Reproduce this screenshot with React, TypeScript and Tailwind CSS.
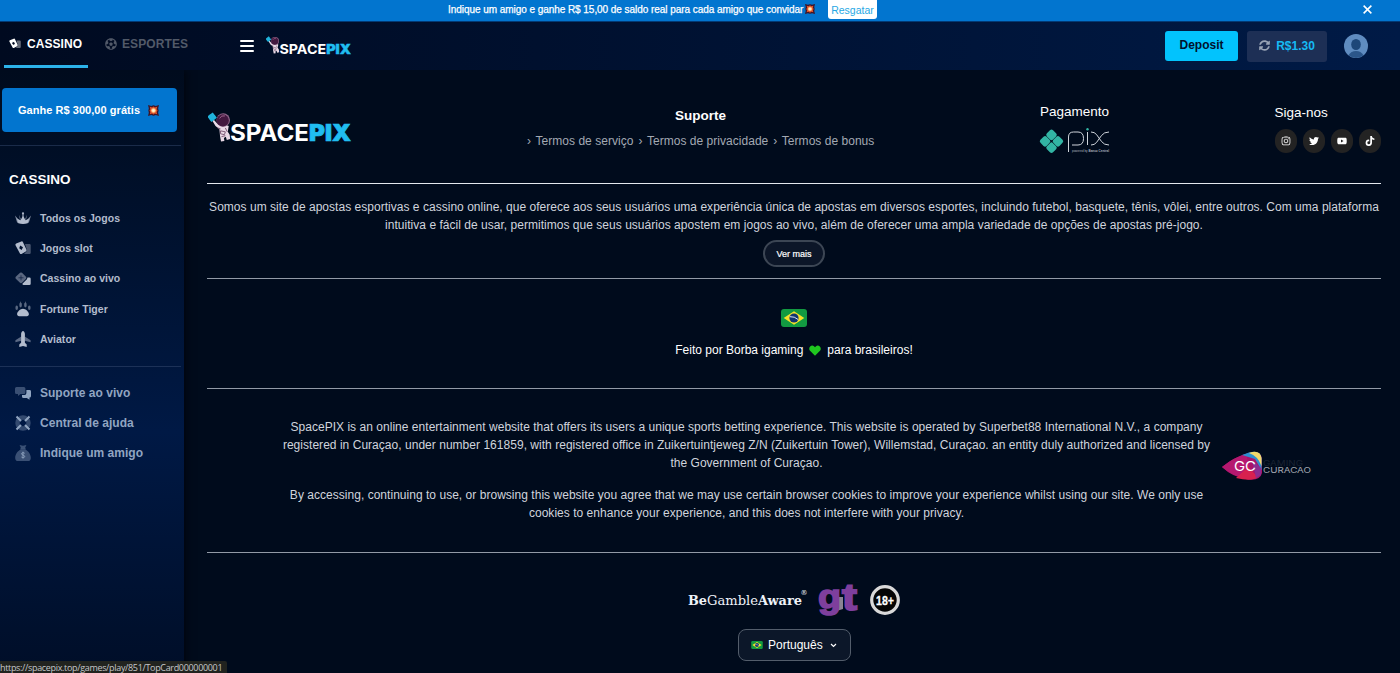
import type { ReactNode } from 'react';
import { FaFutbol, FaInstagram, FaSyncAlt, FaTiktok, FaTwitter, FaYoutube } from 'react-icons/fa';

function Boom({ className }: { className: string }) {
  return (
    <svg viewBox="0 0 12 12" className={className}>
      <path d="M0 0l3.500 1L6 .4 8.500 1 12 0l-.9 3.500L11.600 6l-.5 2.500L12 12l-3.500-1-2.500.6L3.500 11 0 12l.9-3.500L.4 6l.5-2.500z" fill="#3d1427" />
      <path d="M2 2l2.500.6L6 1.600l1.500 1L10 2l-.6 2.500 1 1.500-1 1.500L10 10l-2.500-.6-1.500 1-1.500-1L2 10l.6-2.500-1-1.500 1-1.500z" fill="#e2562d" />
      <circle cx="6" cy="6" r="2.500" fill="#ffd08a" />
      <circle cx="6" cy="6" r="1.300" fill="#fff3d6" />
    </svg>
  );
}

function CardsIcon({ className }: { className: string }) {
  return (
    <svg viewBox="0 0 16 14" className={className} fill="currentColor">
      <path d="M10 3h4.500A1.200 1.200 0 0 1 15.700 4.200v7.600A1.200 1.200 0 0 1 14.500 13H9l3.200-3.500z" opacity=".4" />
      <path fillRule="evenodd" d="M1.200 2.600L6.300.5a1.300 1.300 0 0 1 1.700.7l3.500 7.600a1.300 1.300 0 0 1-.7 1.700L6.500 12.900a1.300 1.300 0 0 1-1.700-.7L.5 4.300a1.300 1.300 0 0 1 .7-1.700zM5.200 4.600L4.200 7.300 6.600 8.900 8 6.200z" />
    </svg>
  );
}

function CrownIcon() {
  return (
    <svg viewBox="0 0 16 14" className="h-[14px] w-4" fill="currentColor">
      <path d="M2 7.500l3.500 1.700L7 6.500 8 5l1 1.500 1.500 2.700L14 7.500l-1.300 4.700Q8 13.800 3.300 12.200z" />
      <path d="M0 4.500l3 3.500.8 3.500-1.600.3zM16 4.500l-3 3.500-.8 3.500 1.600.3zM4 3.800l1.600 3.700-.4 2zM12 3.800l-1.600 3.700.4 2zM7.300 3h1.400v4H7.300z" opacity=".75" />
      <circle cx="8" cy="2.300" r="1.100" />
    </svg>
  );
}

function DiceIcon() {
  return (
    <svg viewBox="0 0 16 14" className="h-[14px] w-4" fill="currentColor">
      <path d="M5 .8q1-.8 2 0l4 4q.8 1 0 2l-4 4q-1 .8-2 0l-4.200-4q-.8-1 0-2z" opacity=".5" />
      <path d="M6 3.300v5M3.500 5.800h5" stroke="#001238" strokeWidth=".6" />
      <path d="M12.500 5.500h1.900a1.300 1.300 0 0 1 1.300 1.300v4.900a1.300 1.300 0 0 1-1.300 1.300H8.700a1.300 1.300 0 0 1-1.300-1.300l4.500-4.500z" />
    </svg>
  );
}

function PawIcon() {
  return (
    <svg viewBox="0 0 16 16" className="size-4" fill="currentColor">
      <path d="M8 7.700c2.600 0 5.900 3 5.900 5.400 0 1.500-.8 2.100-2 2.100H4.100c-1.200 0-2-.6-2-2.100 0-2.400 3.300-5.400 5.900-5.400z" />
      <g opacity=".5">
        <ellipse cx="5.600" cy="4" rx="1.300" ry="2.400" />
        <ellipse cx="10.400" cy="4" rx="1.300" ry="2.400" />
        <ellipse cx="1.700" cy="6.800" rx="1.300" ry="2.200" />
        <ellipse cx="14.300" cy="6.800" rx="1.300" ry="2.200" />
        <path d="M5 2.500L5.400 0l.8 2.500zM9.800 2.500l.8-2.500.4 2.500z" />
      </g>
    </svg>
  );
}

function PlaneIcon() {
  return (
    <svg viewBox="0 0 16 16" className="size-4" fill="currentColor">
      <path d="M6.300 5.500L.4 9.300v1.900l5.900-1.500zM9.700 5.500l5.900 3.800v1.900L9.700 9.700z" opacity=".5" />
      <path d="M8 0c.9 0 1.900 1.500 1.900 3v8.800l1.800 1.800V16L8 15l-3.700 1v-2.400l1.800-1.800V3C6.100 1.500 7.100 0 8 0z" />
    </svg>
  );
}

function ChatIcon() {
  return (
    <svg viewBox="0 0 16 14" className="h-[14px] w-4" fill="currentColor">
      <path d="M1.500 1h7.400a1.500 1.500 0 0 1 1.500 1.500v4A1.500 1.500 0 0 1 8.900 8H5.500L3 10V8H1.500A1.500 1.500 0 0 1 0 6.500v-4A1.500 1.500 0 0 1 1.500 1z" opacity=".4" />
      <path d="M11.400 4h3A1.500 1.500 0 0 1 16 5.500v4.500a1.500 1.500 0 0 1-1.500 1.500H14.500v2.200L11.800 12H8.500A1.500 1.500 0 0 1 7 10.500V9h2.500a1.900 1.900 0 0 0 1.900-1.900z" />
    </svg>
  );
}

function HelpIcon() {
  return (
    <svg viewBox="0 0 16 16" className="size-4">
      <circle cx="8" cy="8" r="5.500" fill="none" stroke="currentColor" strokeWidth="4.400" opacity=".35" />
      <path d="M1.500 1.500L6 6M14.500 1.500L10 6M1.500 14.500L6 10M14.500 14.500L10 10" stroke="currentColor" strokeWidth="2" />
    </svg>
  );
}

function MoneyBagIcon() {
  return (
    <svg viewBox="0 0 16 16" className="size-4">
      <path d="M4.600 0l3.400.8 3.400-.8-1.300 3H5.900z" fill="currentColor" opacity=".4" />
      <path d="M5.400 4.600h5.200c2.500 1.700 5.200 4.500 5.200 8.300 0 2-1 3.100-2.800 3.100H3c-1.800 0-2.800-1.100-2.800-3.100 0-3.800 2.700-6.600 5.200-8.300z" fill="currentColor" opacity=".4" />
      <path d="M5.500 3.800h5" stroke="currentColor" opacity=".6" />
      <path d="M9.700 8.300C9 7.400 6.500 7.500 6.500 8.900s3.200 1 3.200 2.500-2.500 1.600-3.300.6M8 6.700v6.800" fill="none" stroke="currentColor" strokeWidth=".9" />
    </svg>
  );
}

function Astronaut({ className }: { className: string }) {
  return (
    <svg viewBox="0 0 28 30" className={className}>
      <path d="M4.500 8.500l1.500-1 4.500 5 6-.5 5 2-1 6 2 3 .5 4.500-3.500 1-1-3.500-2 1.500.5 3-3.500.5-1-5.500-.7-7.500-4-3z" fill="#e9d9e6" />
      <path d="M10 16l3 1M13 19l5 1-1 3-4-1zM14 25l4-1M18 16l2 4" stroke="#7d5876" fill="none" />
      <circle cx="15.800" cy="7.800" r="7" fill="#8e6488" />
      <circle cx="15.300" cy="8.200" r="6.300" fill="#43183f" />
      <path d="M12 6q2-3.500 5.500-2.500" stroke="#a0688f" fill="none" />
      <g fill="#20b3dc" transform="rotate(8 4 5)">
        <path d="M4.200-.2l2.600 2.500-2.600 2.500-2.600-2.500zM4.200 4.800l2.600 2.500-2.600 2.500-2.600-2.500zM1.700 2.200l2.600 2.600-2.600 2.500L-.9 4.800zM6.700 2.200l2.500 2.600-2.500 2.500-2.600-2.500z" />
      </g>
    </svg>
  );
}

function Wordmark({ className }: { className: string }) {
  return (
    <svg viewBox="0 0 122 22" className={`overflow-visible ${className}`} fontFamily="Inter, sans-serif" fontSize="22.500">
      <text x="0" y="18" textLength="79" lengthAdjust="spacingAndGlyphs" fontWeight="700" fill="#fff">SPACE</text>
      <text x="79" y="18" textLength="42" lengthAdjust="spacingAndGlyphs" fontWeight="900" fill="#20bdf0" stroke="#20bdf0" strokeWidth=".7">PIX</text>
    </svg>
  );
}

function Brazil({ className }: { className: string }) {
  return (
    <svg viewBox="0 0 26 18" className={className}>
      <rect width="26" height="18" rx="3" fill="#129a41" />
      <path d="M13 2.200L23.300 9 13 15.800 2.700 9z" fill="#f7e12a" />
      <circle cx="13" cy="9" r="4.600" fill="#12346f" />
      <path d="M8.800 7.700q4.800-.4 8.300 2.800" stroke="#dfe8f5" strokeWidth="1" fill="none" />
    </svg>
  );
}

const games: { label: string; icon: ReactNode }[] = [
  { label: 'Todos os Jogos', icon: <CrownIcon /> },
  { label: 'Jogos slot', icon: <CardsIcon className="h-[14px] w-4" /> },
  { label: 'Cassino ao vivo', icon: <DiceIcon /> },
  { label: 'Fortune Tiger', icon: <PawIcon /> },
  { label: 'Aviator', icon: <PlaneIcon /> },
];

const support: { label: string; icon: ReactNode }[] = [
  { label: 'Suporte ao vivo', icon: <ChatIcon /> },
  { label: 'Central de ajuda', icon: <HelpIcon /> },
  { label: 'Indique um amigo', icon: <MoneyBagIcon /> },
];

const terms = ['Termos de serviço', 'Termos de privacidade', 'Termos de bonus'];

const socials = [FaInstagram, FaTwitter, FaYoutube, FaTiktok];

function TopBar() {
  return (
    <div className="flex h-[21px] shrink-0 items-start bg-[#0275cf]">
      <span className="ml-[448px] w-[354px] text-[10px] leading-[19px] tracking-[-0.050px] whitespace-nowrap text-white [-webkit-text-stroke:0.25px_white]">
        Indique um amigo e ganhe R$ 15,00 de saldo real para cada amigo que convidar
      </span>
      <Boom className="mt-[4px] ml-[3px] size-[10px]" />
      <button className="ml-[13px] h-[19px] w-[49px] rounded-b-[3px] bg-white text-[10.500px] leading-[18px] text-[#27a8e4]">
        Resgatar
      </button>
      <svg viewBox="0 0 10 10" className="mt-[5px] mr-[28px] ml-auto size-[9px]">
        <path d="M.7.7l8.600 8.600M9.300.7L.7 9.300" stroke="#fff" strokeWidth="1.700" />
      </svg>
    </div>
  );
}

function Header() {
  return (
    <header className="relative z-10 flex h-[49px] shrink-0 border-t border-[#033a75] bg-linear-to-r from-[#000a20] to-[#001a46]">
      <div className="ml-1 flex h-[46px] w-[84px] items-center border-b-3 border-[#2cb2ea] pl-[5px] text-white">
        <CardsIcon className="mr-[6px] h-[11px] w-3" />
        <span className="pt-[1px] text-[12px] font-bold tracking-[0.050px]">CASSINO</span>
      </div>
      <div className="flex h-[44px] w-[152px] items-center pl-[17px] text-[#525a69]">
        <FaFutbol className="mr-[5px] size-3" />
        <span className="text-[12px] font-bold tracking-[0.100px]">ESPORTES</span>
      </div>
      <div className="mt-[18px] flex h-[12px] w-[14px] flex-col justify-between">
        <div className="h-[2px] rounded bg-white" />
        <div className="h-[2px] rounded bg-white" />
        <div className="h-[2px] rounded bg-white" />
      </div>
      <div className="mt-[14px] ml-[12px] flex h-[20px] items-start">
        <Astronaut className="h-[18px] w-[16px]" />
        <Wordmark className="mt-[7px] -ml-[3px] h-[13px] w-[73px]" />
      </div>
      <div className="mt-[9px] mr-[32px] ml-auto flex h-[30px] items-center">
        <button className="h-[30px] w-[73px] rounded-[3px] bg-[#02c3fd] pb-[2px] text-[12px] font-bold text-[#00122e]">Deposit</button>
        <button className="ml-[9px] flex h-[31px] w-[80px] items-center justify-center gap-[6px] rounded-[3px] bg-[#1d2f55] pb-px text-[12px] font-bold text-[#16b9f3]">
          <FaSyncAlt className="size-[11px] text-[#99a4b6]" />
          R$1.30
        </button>
        <svg viewBox="0 0 24 24" className="ml-[17px] size-6">
          <circle cx="12" cy="12" r="12" fill="#5f8cc0" />
          <ellipse cx="12" cy="10.500" rx="4.800" ry="5.500" fill="#1d4778" />
          <path d="M4.500 21.300Q7 17 12 17t7.500 4.300Q16 24 12 24t-7.500-2.700z" fill="#2b568a" />
        </svg>
      </div>
    </header>
  );
}

function Sidebar() {
  return (
    <aside className="w-[184px] shrink-0 bg-linear-to-b from-[#000b1d] via-[#001945] via-60% to-[#000e28] shadow-[2px_0_8px_#00050e]">
      <div className="h-[76px] w-[181px] border-b border-[#1a2b49] pt-[18px] pl-[2px]">
        <button className="flex h-[44px] w-[175px] items-center justify-center rounded-[4px] bg-[#0275cf] pr-[2px] text-[11px] font-bold tracking-[0.050px] text-white">
          Ganhe R$ 300,00 grátis
          <Boom className="ml-[8px] size-[11px]" />
        </button>
      </div>
      <h2 className="mt-[23px] ml-[9px] text-[13.500px] leading-[21px] font-bold text-white">CASSINO</h2>
      <ul className="mt-[13px] h-[163.500px] w-[181px] border-b border-[#1c3157] pl-[15px] text-[#b3bccd]">
        {games.map((game) => (
          <li key={game.label} className="flex h-[30.300px] items-center gap-[9px]">
            <span className="flex w-4 justify-center">{game.icon}</span>
            <span className="pt-px text-[10.500px] font-bold tracking-[0.020px]">{game.label}</span>
          </li>
        ))}
      </ul>
      <ul className="pt-[12px] pl-[15px] text-[#91a5c1]">
        {support.map((item) => (
          <li key={item.label} className="flex h-[29.700px] items-center gap-[9px]">
            <span className="flex w-4 justify-center">{item.icon}</span>
            <span className="text-[12px] font-bold tracking-[0.020px]">{item.label}</span>
          </li>
        ))}
      </ul>
    </aside>
  );
}

function FooterTop() {
  return (
    <div className="flex h-[114px] border-b border-[#e4e8ee]">
      <div className="mt-[42px] flex w-[320px] items-start pl-[1px]">
        <Astronaut className="h-[30px] w-[27px]" />
        <Wordmark className="mt-[10.500px] -ml-[5px] h-[22px] w-[122px]" />
      </div>
      <div className="w-[347px] pt-[37px]">
        <h3 className="text-center text-[13.500px] leading-[18px] font-bold text-white">Suporte</h3>
        <div className="mt-[7px] flex gap-[5px] text-[12px] leading-[18px] tracking-[0.030px] whitespace-nowrap text-[#a3a9b3]">
          {terms.map((term) => (
            <a key={term} className="flex gap-[4.500px]">
              <span>›</span>
              {term}
            </a>
          ))}
        </div>
      </div>
      <div className="ml-[165px] w-[235px] pt-[33px] pl-[1px]">
        <h3 className="text-[13.500px] leading-[18px] text-white">Pagamento</h3>
        <svg viewBox="0 0 70 26" className="mt-[7px] h-[26px] w-[70px] overflow-visible">
          <g fill="#32b5a4" transform="translate(11.500 13.300) rotate(45)">
            <rect x="-8.900" y="-8.900" width="8.700" height="8.700" rx="2.200" />
            <rect x=".2" y="-8.900" width="8.700" height="8.700" rx="2.200" />
            <rect x="-8.900" y=".2" width="8.700" height="8.700" rx="2.200" />
            <rect x=".2" y=".2" width="8.700" height="8.700" rx="2.200" />
          </g>
          <path d="M28.500 24V9q0-5 5-5H38q5.500 0 5.500 6.500T38 17h-6M47.500 4v13M51 4q3.500 0 5.500 2.500l5 7Q64 17 69 17M51 17q3.500 0 5.500-2.500l5-7Q64 4 69 4" fill="none" stroke="#cfd4db" strokeWidth="1" />
          <circle cx="47.500" cy="1.200" r="1.200" fill="#32b5a4" />
          <text x="32" y="24" fontSize="3" textLength="37" fill="#aab2bd" fontFamily="Liberation Sans, sans-serif">powered by <tspan fontWeight="700">Banco Central</tspan></text>
        </svg>
      </div>
      <div className="pt-[34px] pl-[0.500px]">
        <h3 className="text-[13.500px] leading-[18px] text-white">Siga-nos</h3>
        <div className="mt-[7px] flex gap-[6px]">
          {socials.map((Icon, i) => (
            <a key={i} className="flex h-[24px] w-[22px] items-center justify-center rounded-full bg-[#232323] text-white">
              <Icon className="size-[10px]" />
            </a>
          ))}
        </div>
      </div>
    </div>
  );
}

function Badges() {
  return (
    <div className="mt-[30px] flex h-[34px] items-center pl-[481px]">
      <svg
        viewBox="0 0 119 24"
        className="h-[24px] w-[119px] overflow-visible text-[#eef2f8]"
        fontFamily="DejaVu Serif, serif"
        fontSize="13"
        fill="currentColor"
      >
        <text x="0" y="16.500" textLength="19" lengthAdjust="spacingAndGlyphs" fontWeight="700">Be</text>
        <text x="19" y="16.500" textLength="51" lengthAdjust="spacingAndGlyphs">Gamble</text>
        <text x="70" y="16.500" textLength="44" lengthAdjust="spacingAndGlyphs" fontWeight="700">Aware</text>
        <text x="112.500" y="7" fontSize="7">®</text>
      </svg>
      <svg viewBox="0 0 40 34" className="ml-[11px] h-[34px] w-[40px] overflow-visible" fontFamily="Liberation Sans, sans-serif" fontWeight="700">
        <path d="M20 14h5v12l-5 1.500z" fill="#8a8594" />
        <text x="0" y="25" fontSize="34" textLength="23" lengthAdjust="spacingAndGlyphs" fill="#7e3f9d" stroke="#7e3f9d" strokeWidth="1.600">g</text>
        <text x="24" y="27" fontSize="37" textLength="15" lengthAdjust="spacingAndGlyphs" fill="#7e3f9d" stroke="#7e3f9d" strokeWidth="1.800">t</text>
      </svg>
      <svg viewBox="0 0 30 30" className="ml-[12px] size-[30px]">
        <circle cx="15" cy="15" r="13.300" fill="#050505" stroke="#d9d9d9" strokeWidth="3.200" />
        <text x="6" y="19.500" fontSize="13" fontWeight="700" textLength="18" lengthAdjust="spacingAndGlyphs" fill="#fff" stroke="#fff" strokeWidth=".3" fontFamily="Liberation Sans, sans-serif">18+</text>
      </svg>
    </div>
  );
}

function Footer() {
  return (
    <main className="ml-[23px] w-[1174px] text-[#d0d4dc]">
      <FooterTop />
      <section className="h-[95px] border-b border-[#929aa6] pt-[14px] text-center text-[12px] leading-[18px] whitespace-nowrap">
        <p className="tracking-[0.027px]">
          Somos um site de apostas esportivas e cassino online, que oferece aos seus usuários uma experiência única de apostas em diversos esportes, incluindo futebol, basquete, tênis, vôlei, entre outros. Com uma plataforma
          <br />
          intuitiva e fácil de usar, permitimos que seus usuários apostem em jogos ao vivo, além de oferecer uma ampla variedade de opções de apostas pré-jogo.
        </p>
        <button className="mx-auto mt-[6px] block h-[27px] w-[62px] rounded-full border-2 border-[#3c4654] bg-[#0c1628] text-[9px] leading-[22px] text-white [-webkit-text-stroke:0.2px_white]">
          Ver mais
        </button>
      </section>
      <section className="flex h-[110px] flex-col items-center border-b border-[#929aa6] pt-[30px]">
        <Brazil className="h-[18px] w-[26px]" />
        <p className="mt-[14px] flex items-center text-[12px] leading-[18px] text-white">
          Feito por Borba igaming
          <svg viewBox="0 0 12 11" className="mx-[6px] h-[11px] w-3">
            <path d="M6 10.800L.8 5.600C-1.200 2.500 2.500-.8 5 1.200l1 1 1-1c2.500-2 6.200 1.300 4.200 4.400z" fill="#1fc71f" />
          </svg>
          para brasileiros!
        </p>
      </section>
      <section className="flex h-[164px] border-b border-[#929aa6] pt-[29px]">
        <div className="ml-[73px] w-[933px] text-center text-[12px] leading-[18px] tracking-[0.030px] whitespace-nowrap">
          <p>
            SpacePIX is an online entertainment website that offers its users a unique sports betting experience. This website is operated by Superbet88 International N.V., a company
            <br />
            registered in Curaçao, under number 161859, with registered office in Zuikertuintjeweg Z/N (Zuikertuin Tower), Willemstad, Curaçao. an entity duly authorized and licensed by
            <br />
            the Government of Curaçao.
          </p>
          <p className="mt-[14px]">
            By accessing, continuing to use, or browsing this website you agree that we may use certain browser cookies to improve your experience whilst using our site. We only use
            <br />
            cookies to enhance your experience, and this does not interfere with your privacy.
          </p>
        </div>
        <svg viewBox="0 0 90 30" className="mt-[33px] ml-[9px] h-[30px] w-[90px] overflow-visible" fontFamily="Inter, sans-serif">
          <path d="M0 16Q12 6 28 1.500 39-1 40 8v14q-2 8-14 6.500Q10 26 0 16z" fill="#a9146a" />
          <path d="M0 16Q12 6 24 3l4 16-10 7Q8 23 0 16z" fill="#b5186f" />
          <path d="M14 27l12-11 10 10q-6 5-22 1z" fill="#d8214f" />
          <path d="M20 4q18-8 19.500 3V19L33 8z" fill="#2c8fd0" />
          <path d="M27 2q11-4 12.500 5v8Q36 5 27 2z" fill="#f1d86b" />
          <path d="M30 9l9 8v7l-5 3z" fill="#8c2c90" />
          <text x="12" y="19.800" fontSize="13" textLength="22" lengthAdjust="spacingAndGlyphs" fill="#fff">GC</text>
          <text x="41" y="14.500" fontSize="7.500" textLength="40" lengthAdjust="spacingAndGlyphs" fill="#182231">GAMING</text>
          <text x="41" y="21.800" fontSize="7.800" textLength="48" lengthAdjust="spacingAndGlyphs" fill="#a1a6af">CURACAO</text>
        </svg>
      </section>
      <Badges />
      <button className="mt-[12px] ml-[531px] flex h-[32px] w-[113px] items-center rounded-[8px] border border-[#535d6b] bg-[#0c1729] pl-[12px] text-[12px] text-white">
        <Brazil className="mr-[5px] h-[8px] w-[12px]" />
        Português
        <svg viewBox="0 0 8 6" className="ml-[7px] h-[5px] w-[7px]">
          <path d="M1 1.200l3 3 3-3" fill="none" stroke="#fff" strokeWidth="1.400" />
        </svg>
      </button>
    </main>
  );
}

export default function App() {
  return (
    <div className="relative flex h-[673px] w-[1400px] flex-col overflow-hidden bg-[#000b1c] font-['Liberation_Sans',Arial,sans-serif]">
      <TopBar />
      <Header />
      <div className="flex min-h-0 flex-1">
        <Sidebar />
        <Footer />
      </div>
      <div className="absolute bottom-0 left-0 h-[12px] w-[227px] rounded-tr-[2px] bg-[#21231f] font-['Open_Sans','Noto_Sans',sans-serif] text-[9px] leading-[13px] tracking-[-0.330px] whitespace-nowrap text-[#c5c7c9]">
        https://spacepix.top/games/play/851/TopCard000000001
      </div>
    </div>
  );
}
